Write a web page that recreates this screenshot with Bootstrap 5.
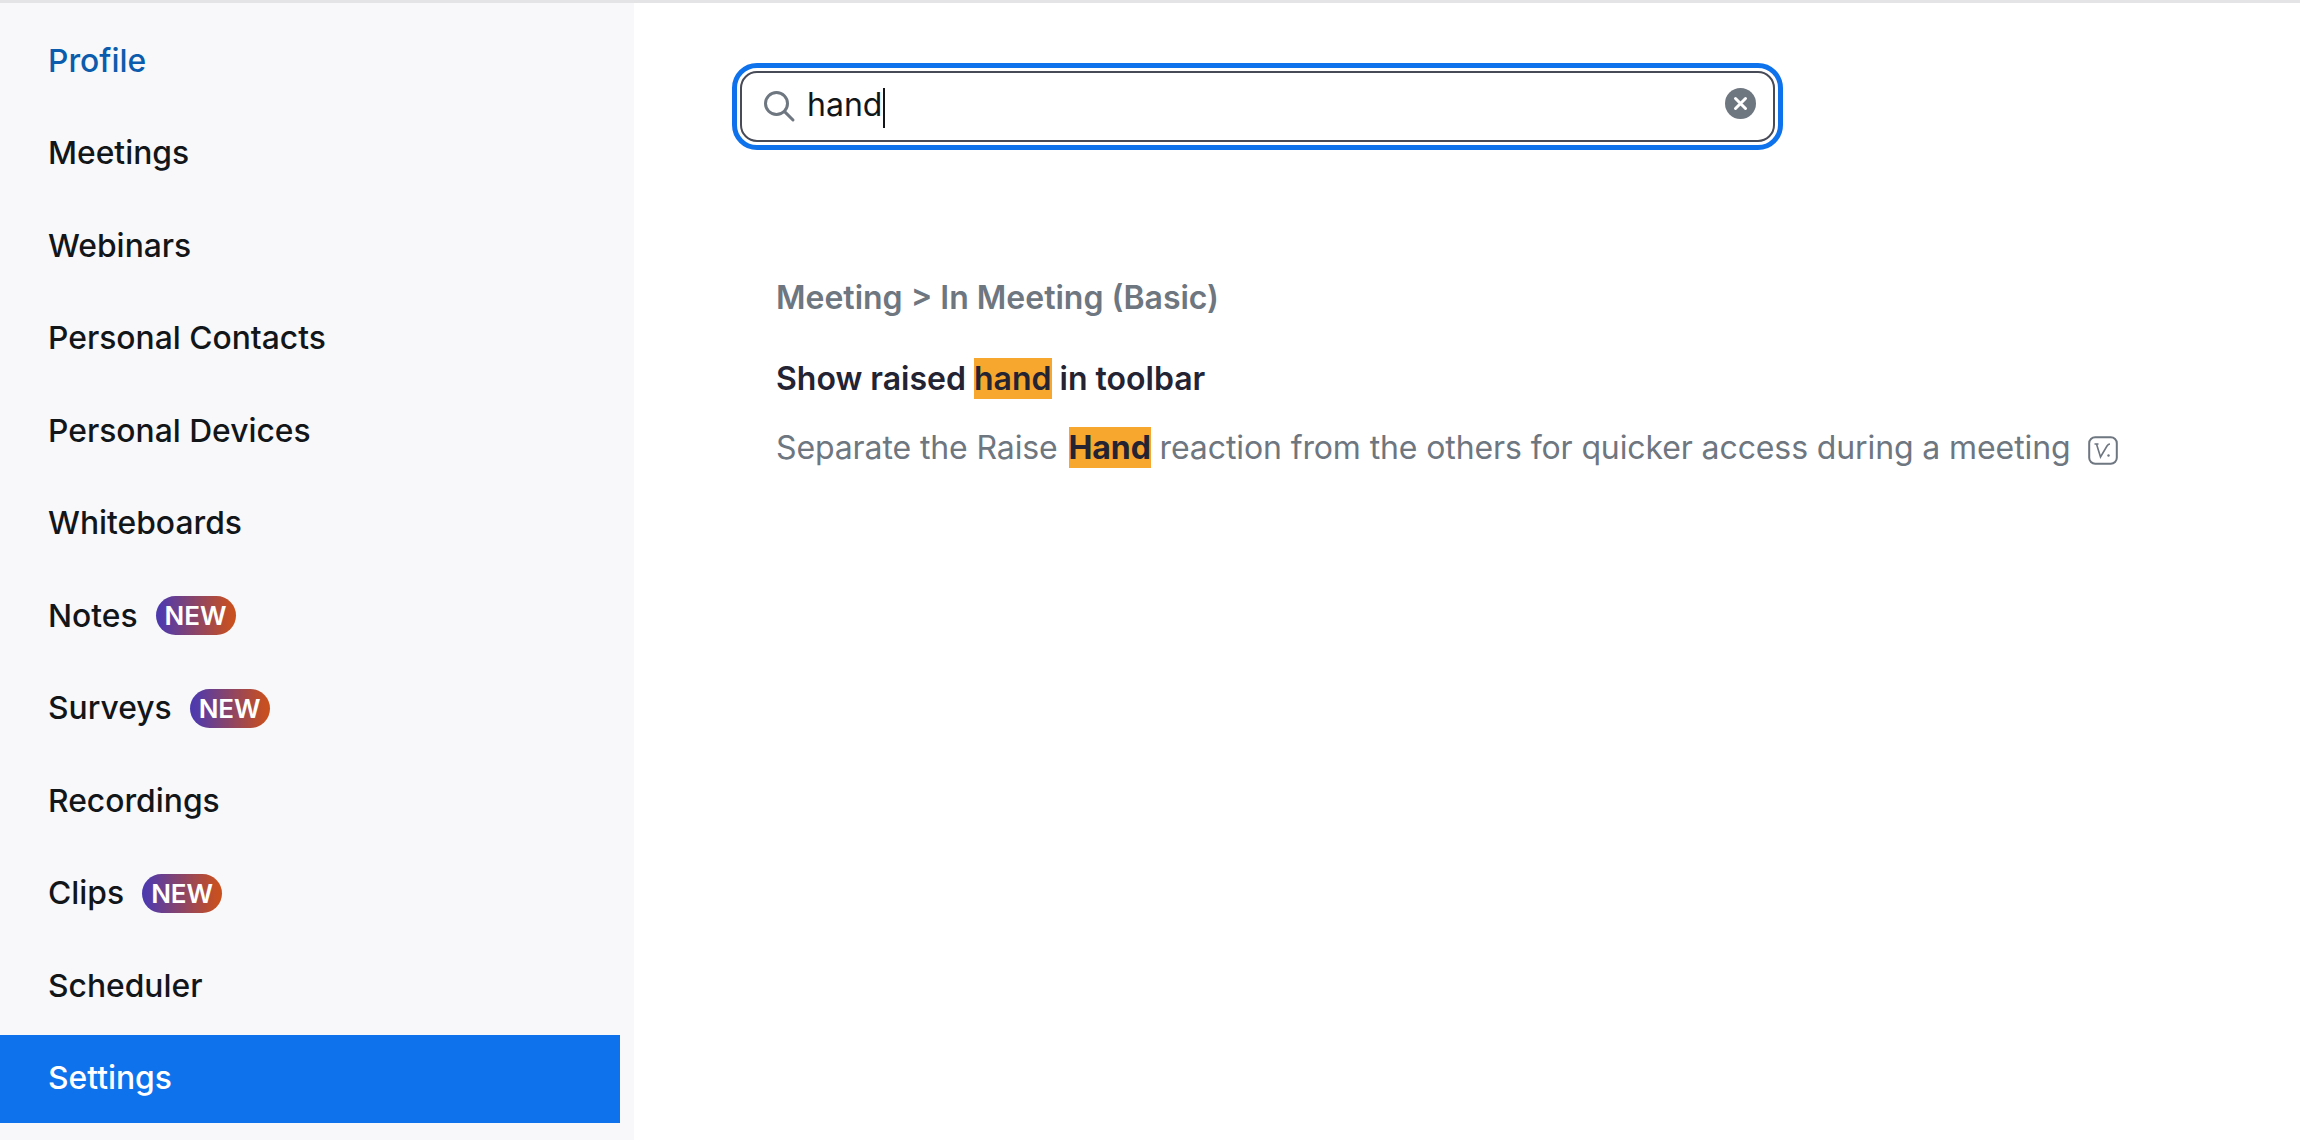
<!DOCTYPE html>
<html lang="en">
<head>
    <meta charset="UTF-8">
    <meta name="viewport" content="width=device-width, initial-scale=1.0">
    <title>Settings</title>
    <link href="https://cdn.jsdelivr.net/npm/bootstrap@5.3.0/dist/css/bootstrap.min.css" rel="stylesheet">
    <style>
        html, body { height: 100%; overflow: hidden; }
        body { font-family: Inter, "Liberation Sans", sans-serif; background: #fff; }
        .top-line { height: 3px; background: #e4e4e6; }
        .app-shell { height: 1137px; }
        .side-menu { width: 634px; background: #f8f8fb; padding: 14px 14px 0 0; }
        .side-menu .nav-link { height: 88px; margin-bottom: 4.5px; padding: 0 0 1px 48px; font-size: 31.8px; font-weight: 450; color: #131619; gap: 18px; }
        .side-menu .nav-link.current { color: #0b5cad; }
        .side-menu .nav-link.active { background: #0e72ed; color: #fff; border-radius: 0; }
        .new-tag { font-size: 26px; font-weight: 600; line-height: 39px; height: 39px; padding: 0 9px; border-radius: 20px; color: #fff; background: linear-gradient(90deg, #4f3aad 5%, #c8501f 95%); }
        .main-pane { padding: 60px 0 0 98px; }
        .search-ring { width: 1051px; height: 87px; border: 5px solid #0e72ed; border-radius: 25px; padding: 3px; }
        .search-box { height: 100%; border: 2px solid #474a57; border-radius: 17px; padding: 0 17px 0 20px; }
        .search-icon { margin-bottom: 2px; }
        .search-text { font-size: 32px; color: #131619; margin-left: 11px; line-height: 36px; padding-top: 2px; }
        .caret-bar { display: inline-block; width: 2px; height: 40px; background: #131619; vertical-align: middle; margin-left: 1px; }
        .clear-btn { margin-bottom: 7px; }
        .result-block { margin: 128px 0 0 44px; }
        .result-path { font-size: 32px; font-weight: 600; color: #6e7680; line-height: 40px; margin-bottom: 41px; }
        .result-title { font-size: 32px; font-weight: 600; color: #232333; line-height: 40px; margin-bottom: 29px; }
        .result-desc { font-size: 32px; color: #6e7680; line-height: 40px; letter-spacing: -.11px; }
        .hit { background: #f7a72d; color: #232333; padding: 1px 0; }
        .hit-strong { font-weight: 700; margin-left: 2px; }
        .shortcut-icon { margin-left: 9px; vertical-align: -6px; }
    </style>
</head>
<body>
    <div class="top-line"></div>
    <div class="app-shell d-flex">
        <!-- left menu -->
        <nav class="side-menu nav flex-column flex-nowrap flex-shrink-0">
            <a class="nav-link d-flex align-items-center current" href="#">Profile</a>
            <a class="nav-link d-flex align-items-center" href="#">Meetings</a>
            <a class="nav-link d-flex align-items-center" href="#">Webinars</a>
            <a class="nav-link d-flex align-items-center" href="#">Personal Contacts</a>
            <a class="nav-link d-flex align-items-center" href="#">Personal Devices</a>
            <a class="nav-link d-flex align-items-center" href="#">Whiteboards</a>
            <a class="nav-link d-flex align-items-center" href="#">Notes <span class="new-tag">NEW</span></a>
            <a class="nav-link d-flex align-items-center" href="#">Surveys <span class="new-tag">NEW</span></a>
            <a class="nav-link d-flex align-items-center" href="#">Recordings</a>
            <a class="nav-link d-flex align-items-center" href="#">Clips <span class="new-tag">NEW</span></a>
            <a class="nav-link d-flex align-items-center" href="#">Scheduler</a>
            <a class="nav-link d-flex align-items-center active" href="#">Settings</a>
        </nav>

        <!-- search results -->
        <main class="main-pane flex-grow-1">
            <div class="search-ring">
                <div class="search-box d-flex align-items-center">
                    <svg class="search-icon" width="34" height="34" viewBox="0 0 34 34" fill="none" stroke="#6e7680" stroke-width="3" stroke-linecap="round">
                        <circle cx="14.5" cy="14.5" r="11"/>
                        <path d="M22.6 22.6 L31 31"/>
                    </svg>
                    <span class="search-text">hand<span class="caret-bar"></span></span>
                    <svg class="clear-btn ms-auto" width="31" height="31" viewBox="0 0 31 31">
                        <circle cx="15.5" cy="15.5" r="15.5" fill="#6e7680"/>
                        <path d="M10.5 10.5 L20.5 20.5 M20.5 10.5 L10.5 20.5" stroke="#fff" stroke-width="3" stroke-linecap="round"/>
                    </svg>
                </div>
            </div>
            <div class="result-block">
                <div class="result-path">Meeting &gt; In Meeting (Basic)</div>
                <div class="result-title">Show raised <span class="hit">hand</span> in toolbar</div>
                <div class="result-desc">Separate the Raise <span class="hit hit-strong">Hand</span> reaction from the others for quicker access during a meeting
                    <svg class="shortcut-icon" width="30" height="29" viewBox="0 0 30 29" fill="none" stroke="#6e7680">
                        <rect x="1.2" y="1.2" width="27.6" height="26.6" rx="6" stroke-width="2"/>
                        <path d="M6.5 8 H10.5 M8.5 8 L12.5 21 L19 10 C19.6 9 20.5 8 22 8" stroke-width="1.6"/>
                        <circle cx="20.5" cy="19.5" r="1.2" fill="#6e7680" stroke="none"/>
                    </svg>
                </div>
            </div>
        </main>
    </div>
    <script src="https://cdn.jsdelivr.net/npm/bootstrap@5.3.0/dist/js/bootstrap.bundle.min.js"></script>
</body>
</html>
